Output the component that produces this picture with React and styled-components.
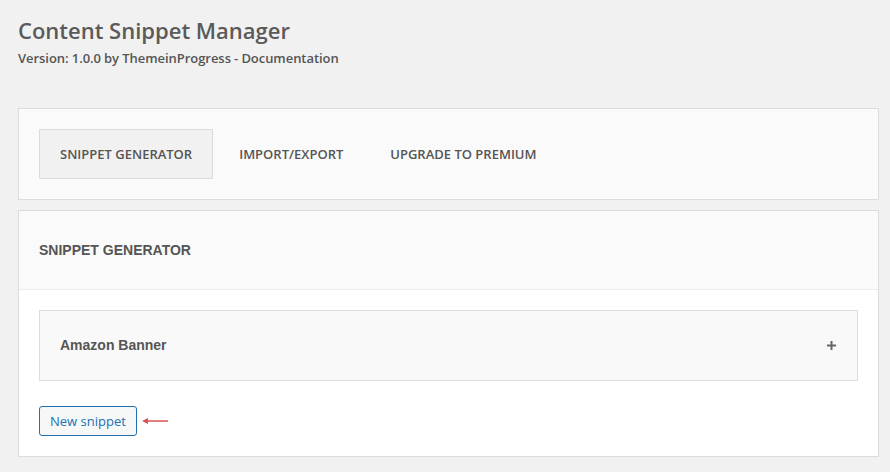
import React from "react";
import styled, { createGlobalStyle } from "styled-components";

const Global = createGlobalStyle`
  html, body { margin: 0; padding: 0; background: #f1f1f1; }
  body { font-family: "Open Sans", "Liberation Sans", sans-serif; color: #555; }
  * { box-sizing: border-box; }
`;

const Page = styled.div`
  padding: 16px 11px 15px 18px;
`;

const Title = styled.h1`
  margin: 0;
  font-family: "Open Sans", sans-serif;
  font-weight: 600;
  font-size: 22px;
  line-height: 28px;
  color: #5a5a5a;
`;

const Meta = styled.p`
  margin: 4px 0 0;
  font-family: "Open Sans", sans-serif;
  font-weight: 600;
  font-size: 13px;
  line-height: 20px;
  color: #555;
  display: flex;
  gap: 3px;
  letter-spacing: -0.05px;
`;

const Card = styled.section`
  margin-top: ${(p) => p.$mt}px;
  background: ${(p) => p.$bg || "#fff"};
  border: 1px solid #dcdcdc;
`;

const TabBar = styled.nav`
  display: flex;
  gap: 5px;
  padding: 20px;
`;

const Tab = styled.div`
  height: 50px;
  padding: 0 20px;
  display: flex;
  align-items: center;
  font-family: "Open Sans", sans-serif;
  font-weight: 600;
  font-size: 13px;
  text-transform: uppercase;
  color: #555;
  border: 1px solid ${(p) => (p.$active ? "#dcdcdc" : "transparent")};
  background: ${(p) => (p.$active ? "#f1f1f1" : "transparent")};
`;

const PanelHeader = styled.header`
  height: 79px;
  padding: 0 20px;
  display: flex;
  align-items: center;
  background: #fafafa;
  border-bottom: 1px solid #ececec;
  font-family: "Liberation Sans", Arial, sans-serif;
  font-weight: 700;
  font-size: 14px;
  color: #555;
`;

const PanelBody = styled.div`
  padding: 20px;
`;

const Accordion = styled.div`
  height: 71px;
  padding: 0 21px 1px 20px;
  display: flex;
  align-items: center;
  justify-content: space-between;
  background: #f9f9f9;
  border: 1px solid #dcdcdc;
  font-family: "Liberation Sans", Arial, sans-serif;
  font-weight: 700;
  font-size: 14px;
  color: #555;
`;

const Actions = styled.div`
  margin-top: 25px;
  display: flex;
  align-items: center;
  gap: 4px;
`;

const Button = styled.button`
  height: 30px;
  padding: 0 10px;
  font-family: "Open Sans", sans-serif;
  font-size: 13px;
  color: #2271b1;
  background: #f6f7f7;
  border: 1px solid #2271b1;
  border-radius: 3px;
  cursor: pointer;
`;

const Plus = () => (
  <svg width="9" height="9" viewBox="0 0 9 9" aria-hidden="true">
    <rect x="0" y="3.5" width="9" height="2" fill="#666" />
    <rect x="3.5" y="0" width="2" height="9" fill="#666" />
  </svg>
);

const Arrow = () => (
  <svg width="28" height="10" viewBox="0 0 28 10" aria-hidden="true">
    <line x1="4" y1="5" x2="27" y2="5" stroke="#d9534f" strokeWidth="1.5" />
    <path d="M1 5 L7 2 L7 8 Z" fill="#d9534f" />
  </svg>
);

export default function App() {
  return (
    <>
      <Global />
      <Page>
        <Title>Content Snippet Manager</Title>
        <Meta>
          <span>Version: 1.0.0</span>
          <span>by ThemeinProgress</span>
          <span>- Documentation</span>
        </Meta>
        <Card $mt={40} $bg="#fafafa">
          <TabBar>
            <Tab $active>Snippet Generator</Tab>
            <Tab>Import/Export</Tab>
            <Tab>Upgrade to Premium</Tab>
          </TabBar>
        </Card>
        <Card $mt={10}>
          <PanelHeader>SNIPPET GENERATOR</PanelHeader>
          <PanelBody>
            <Accordion>
              <span>Amazon Banner</span>
              <Plus />
            </Accordion>
            <Actions>
              <Button>New snippet</Button>
              <Arrow />
            </Actions>
          </PanelBody>
        </Card>
      </Page>
    </>
  );
}
